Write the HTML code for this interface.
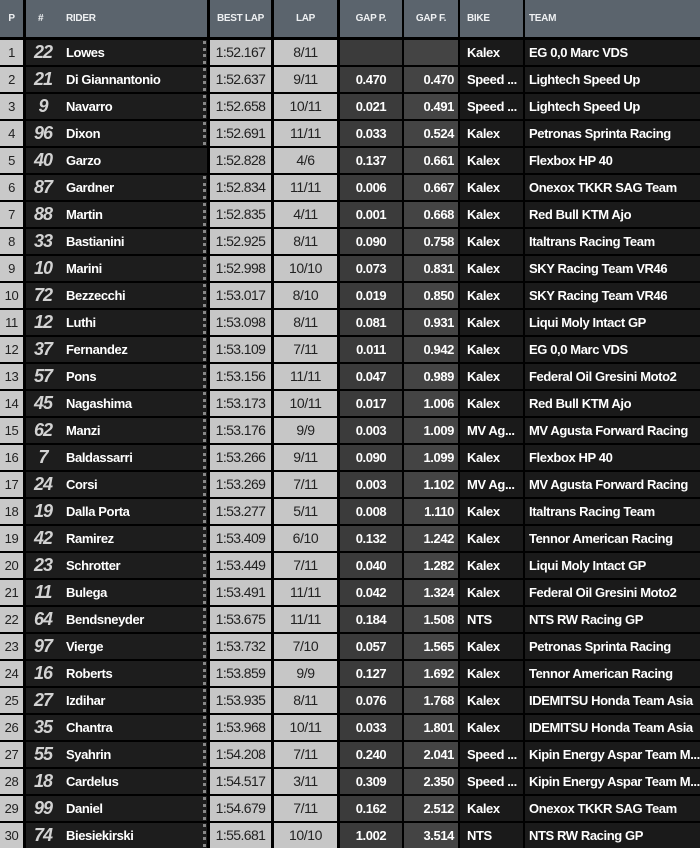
<!DOCTYPE html>
<html><head><meta charset="utf-8"><style>
body{margin:0;background:#000;width:700px;height:847px;overflow:hidden;font-family:"Liberation Sans",sans-serif;position:relative}
.h{position:absolute;top:0;height:37px;background:#5b646d;color:#eef0f2;font-size:10px;font-weight:bold;line-height:37px;letter-spacing:-0.3px}
.r{position:absolute;left:0;width:700px;height:25px}
.r div{position:absolute;top:0;height:25px;line-height:25px;font-size:13px;font-weight:bold;letter-spacing:-0.4px;white-space:nowrap;overflow:hidden}
.p{left:0;width:23px;background:#c9c9c9;color:#222;text-align:center;font-weight:normal!important}
.rd{left:26px;width:181px;background:#1d1d1d;color:#fff}
.rd i{position:absolute;left:0;width:34px;text-align:center;font-size:18px;font-style:italic;font-weight:900;color:#d2d2d2;letter-spacing:-1px;top:0}
.rd b{position:absolute;left:40px}
.rd s{position:absolute;right:1px;top:1px;height:23px;border-right:3px dotted #888;text-decoration:none}
.bl{left:210px;width:61px;background:#c6c6c6;color:#222;text-align:center;font-weight:normal!important;font-size:14px!important;letter-spacing:-0.6px!important}
.lp{left:274px;width:63px;background:#c6c6c6;color:#222;text-align:center;font-weight:normal!important;font-size:14px!important}
.gp{left:340px;width:62px;background:#3b3b3b;color:#fff;text-align:center}
.gf{left:404px;width:54px;background:#444;color:#fff;text-align:right;padding-right:0}
.gf span{padding-right:4px}
.bk{left:460px;width:63px;background:#1a1a1a;color:#fff;text-indent:7px}
.tm{left:525px;width:175px;background:#1a1a1a;color:#fff;text-indent:4px}
</style></head><body>
<div class="h" style="left:0;width:23px;text-align:center">P</div>
<div class="h" style="left:26px;width:181px"><span style="position:absolute;left:12px">#</span><span style="position:absolute;left:40px">RIDER</span></div>
<div class="h" style="left:210px;width:61px;text-align:center">BEST LAP</div>
<div class="h" style="left:274px;width:63px;text-align:center">LAP</div>
<div class="h" style="left:340px;width:62px;text-align:center">GAP P.</div>
<div class="h" style="left:404px;width:54px;text-align:center">GAP F.</div>
<div class="h" style="left:460px;width:63px;text-indent:7px">BIKE</div>
<div class="h" style="left:525px;width:175px;text-indent:4px">TEAM</div>

<div class="r" style="top:40px"><div class="p">1</div><div class="rd"><i>22</i><b>Lowes</b><s></s></div><div class="bl">1:52.167</div><div class="lp">8/11</div><div class="gp"></div><div class="gf"></div><div class="bk">Kalex</div><div class="tm">EG 0,0 Marc VDS</div></div>
<div class="r" style="top:67px"><div class="p">2</div><div class="rd"><i>21</i><b>Di Giannantonio</b><s></s></div><div class="bl">1:52.637</div><div class="lp">9/11</div><div class="gp">0.470</div><div class="gf"><span>0.470</span></div><div class="bk">Speed ...</div><div class="tm">Lightech Speed Up</div></div>
<div class="r" style="top:94px"><div class="p">3</div><div class="rd"><i>9</i><b>Navarro</b><s></s></div><div class="bl">1:52.658</div><div class="lp">10/11</div><div class="gp">0.021</div><div class="gf"><span>0.491</span></div><div class="bk">Speed ...</div><div class="tm">Lightech Speed Up</div></div>
<div class="r" style="top:121px"><div class="p">4</div><div class="rd"><i>96</i><b>Dixon</b><s></s></div><div class="bl">1:52.691</div><div class="lp">11/11</div><div class="gp">0.033</div><div class="gf"><span>0.524</span></div><div class="bk">Kalex</div><div class="tm">Petronas Sprinta Racing</div></div>
<div class="r" style="top:148px"><div class="p">5</div><div class="rd"><i>40</i><b>Garzo</b></div><div class="bl">1:52.828</div><div class="lp">4/6</div><div class="gp">0.137</div><div class="gf"><span>0.661</span></div><div class="bk">Kalex</div><div class="tm">Flexbox HP 40</div></div>
<div class="r" style="top:175px"><div class="p">6</div><div class="rd"><i>87</i><b>Gardner</b><s></s></div><div class="bl">1:52.834</div><div class="lp">11/11</div><div class="gp">0.006</div><div class="gf"><span>0.667</span></div><div class="bk">Kalex</div><div class="tm">Onexox TKKR SAG Team</div></div>
<div class="r" style="top:202px"><div class="p">7</div><div class="rd"><i>88</i><b>Martin</b><s></s></div><div class="bl">1:52.835</div><div class="lp">4/11</div><div class="gp">0.001</div><div class="gf"><span>0.668</span></div><div class="bk">Kalex</div><div class="tm">Red Bull KTM Ajo</div></div>
<div class="r" style="top:229px"><div class="p">8</div><div class="rd"><i>33</i><b>Bastianini</b><s></s></div><div class="bl">1:52.925</div><div class="lp">8/11</div><div class="gp">0.090</div><div class="gf"><span>0.758</span></div><div class="bk">Kalex</div><div class="tm">Italtrans Racing Team</div></div>
<div class="r" style="top:256px"><div class="p">9</div><div class="rd"><i>10</i><b>Marini</b><s></s></div><div class="bl">1:52.998</div><div class="lp">10/10</div><div class="gp">0.073</div><div class="gf"><span>0.831</span></div><div class="bk">Kalex</div><div class="tm">SKY Racing Team VR46</div></div>
<div class="r" style="top:283px"><div class="p">10</div><div class="rd"><i>72</i><b>Bezzecchi</b><s></s></div><div class="bl">1:53.017</div><div class="lp">8/10</div><div class="gp">0.019</div><div class="gf"><span>0.850</span></div><div class="bk">Kalex</div><div class="tm">SKY Racing Team VR46</div></div>
<div class="r" style="top:310px"><div class="p">11</div><div class="rd"><i>12</i><b>Luthi</b><s></s></div><div class="bl">1:53.098</div><div class="lp">8/11</div><div class="gp">0.081</div><div class="gf"><span>0.931</span></div><div class="bk">Kalex</div><div class="tm">Liqui Moly Intact GP</div></div>
<div class="r" style="top:337px"><div class="p">12</div><div class="rd"><i>37</i><b>Fernandez</b><s></s></div><div class="bl">1:53.109</div><div class="lp">7/11</div><div class="gp">0.011</div><div class="gf"><span>0.942</span></div><div class="bk">Kalex</div><div class="tm">EG 0,0 Marc VDS</div></div>
<div class="r" style="top:364px"><div class="p">13</div><div class="rd"><i>57</i><b>Pons</b><s></s></div><div class="bl">1:53.156</div><div class="lp">11/11</div><div class="gp">0.047</div><div class="gf"><span>0.989</span></div><div class="bk">Kalex</div><div class="tm">Federal Oil Gresini Moto2</div></div>
<div class="r" style="top:391px"><div class="p">14</div><div class="rd"><i>45</i><b>Nagashima</b><s></s></div><div class="bl">1:53.173</div><div class="lp">10/11</div><div class="gp">0.017</div><div class="gf"><span>1.006</span></div><div class="bk">Kalex</div><div class="tm">Red Bull KTM Ajo</div></div>
<div class="r" style="top:418px"><div class="p">15</div><div class="rd"><i>62</i><b>Manzi</b><s></s></div><div class="bl">1:53.176</div><div class="lp">9/9</div><div class="gp">0.003</div><div class="gf"><span>1.009</span></div><div class="bk">MV Ag...</div><div class="tm">MV Agusta Forward Racing</div></div>
<div class="r" style="top:445px"><div class="p">16</div><div class="rd"><i>7</i><b>Baldassarri</b><s></s></div><div class="bl">1:53.266</div><div class="lp">9/11</div><div class="gp">0.090</div><div class="gf"><span>1.099</span></div><div class="bk">Kalex</div><div class="tm">Flexbox HP 40</div></div>
<div class="r" style="top:472px"><div class="p">17</div><div class="rd"><i>24</i><b>Corsi</b><s></s></div><div class="bl">1:53.269</div><div class="lp">7/11</div><div class="gp">0.003</div><div class="gf"><span>1.102</span></div><div class="bk">MV Ag...</div><div class="tm">MV Agusta Forward Racing</div></div>
<div class="r" style="top:499px"><div class="p">18</div><div class="rd"><i>19</i><b>Dalla Porta</b><s></s></div><div class="bl">1:53.277</div><div class="lp">5/11</div><div class="gp">0.008</div><div class="gf"><span>1.110</span></div><div class="bk">Kalex</div><div class="tm">Italtrans Racing Team</div></div>
<div class="r" style="top:526px"><div class="p">19</div><div class="rd"><i>42</i><b>Ramirez</b><s></s></div><div class="bl">1:53.409</div><div class="lp">6/10</div><div class="gp">0.132</div><div class="gf"><span>1.242</span></div><div class="bk">Kalex</div><div class="tm">Tennor American Racing</div></div>
<div class="r" style="top:553px"><div class="p">20</div><div class="rd"><i>23</i><b>Schrotter</b><s></s></div><div class="bl">1:53.449</div><div class="lp">7/11</div><div class="gp">0.040</div><div class="gf"><span>1.282</span></div><div class="bk">Kalex</div><div class="tm">Liqui Moly Intact GP</div></div>
<div class="r" style="top:580px"><div class="p">21</div><div class="rd"><i>11</i><b>Bulega</b><s></s></div><div class="bl">1:53.491</div><div class="lp">11/11</div><div class="gp">0.042</div><div class="gf"><span>1.324</span></div><div class="bk">Kalex</div><div class="tm">Federal Oil Gresini Moto2</div></div>
<div class="r" style="top:607px"><div class="p">22</div><div class="rd"><i>64</i><b>Bendsneyder</b><s></s></div><div class="bl">1:53.675</div><div class="lp">11/11</div><div class="gp">0.184</div><div class="gf"><span>1.508</span></div><div class="bk">NTS</div><div class="tm">NTS RW Racing GP</div></div>
<div class="r" style="top:634px"><div class="p">23</div><div class="rd"><i>97</i><b>Vierge</b><s></s></div><div class="bl">1:53.732</div><div class="lp">7/10</div><div class="gp">0.057</div><div class="gf"><span>1.565</span></div><div class="bk">Kalex</div><div class="tm">Petronas Sprinta Racing</div></div>
<div class="r" style="top:661px"><div class="p">24</div><div class="rd"><i>16</i><b>Roberts</b><s></s></div><div class="bl">1:53.859</div><div class="lp">9/9</div><div class="gp">0.127</div><div class="gf"><span>1.692</span></div><div class="bk">Kalex</div><div class="tm">Tennor American Racing</div></div>
<div class="r" style="top:688px"><div class="p">25</div><div class="rd"><i>27</i><b>Izdihar</b><s></s></div><div class="bl">1:53.935</div><div class="lp">8/11</div><div class="gp">0.076</div><div class="gf"><span>1.768</span></div><div class="bk">Kalex</div><div class="tm">IDEMITSU Honda Team Asia</div></div>
<div class="r" style="top:715px"><div class="p">26</div><div class="rd"><i>35</i><b>Chantra</b><s></s></div><div class="bl">1:53.968</div><div class="lp">10/11</div><div class="gp">0.033</div><div class="gf"><span>1.801</span></div><div class="bk">Kalex</div><div class="tm">IDEMITSU Honda Team Asia</div></div>
<div class="r" style="top:742px"><div class="p">27</div><div class="rd"><i>55</i><b>Syahrin</b><s></s></div><div class="bl">1:54.208</div><div class="lp">7/11</div><div class="gp">0.240</div><div class="gf"><span>2.041</span></div><div class="bk">Speed ...</div><div class="tm">Kipin Energy Aspar Team M...</div></div>
<div class="r" style="top:769px"><div class="p">28</div><div class="rd"><i>18</i><b>Cardelus</b><s></s></div><div class="bl">1:54.517</div><div class="lp">3/11</div><div class="gp">0.309</div><div class="gf"><span>2.350</span></div><div class="bk">Speed ...</div><div class="tm">Kipin Energy Aspar Team M...</div></div>
<div class="r" style="top:796px"><div class="p">29</div><div class="rd"><i>99</i><b>Daniel</b><s></s></div><div class="bl">1:54.679</div><div class="lp">7/11</div><div class="gp">0.162</div><div class="gf"><span>2.512</span></div><div class="bk">Kalex</div><div class="tm">Onexox TKKR SAG Team</div></div>
<div class="r" style="top:823px"><div class="p">30</div><div class="rd"><i>74</i><b>Biesiekirski</b><s></s></div><div class="bl">1:55.681</div><div class="lp">10/10</div><div class="gp">1.002</div><div class="gf"><span>3.514</span></div><div class="bk">NTS</div><div class="tm">NTS RW Racing GP</div></div>
</body></html>
